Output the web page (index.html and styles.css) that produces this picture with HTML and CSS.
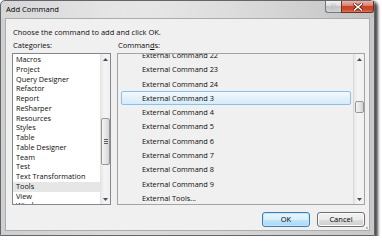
FILE: index.html
```html
<!DOCTYPE html>
<html>
<head>
<meta charset="utf-8">
<link rel="stylesheet" href="styles.css">
</head>
<body>
<div class="window">
  <div class="titlebar">
    <span class="title">Add Command</span>
    <div class="caption">
      <div class="cbtn help">?</div>
      <div class="cbtn close">
        <svg width="10" height="8" viewBox="0 0 10 8"><path d="M1.5 1 L8.5 7 M8.5 1 L1.5 7" stroke="#5a1a10" stroke-width="3" stroke-linecap="square"/><path d="M1.5 1 L8.5 7 M8.5 1 L1.5 7" stroke="#fff" stroke-width="1.6" stroke-linecap="square"/></svg>
      </div>
    </div>
  </div>
  <div class="client">
    <div class="prompt">Choose the command to add and click OK.</div>
    <div class="columns">
      <div class="col">
        <div class="label">Categories:</div>
        <div class="listbox cats">
          <div class="items">
            <div class="item">Macros</div>
            <div class="item">Project</div>
            <div class="item">Query Designer</div>
            <div class="item">Refactor</div>
            <div class="item">Report</div>
            <div class="item">ReSharper</div>
            <div class="item">Resources</div>
            <div class="item">Styles</div>
            <div class="item">Table</div>
            <div class="item">Table Designer</div>
            <div class="item">Team</div>
            <div class="item">Test</div>
            <div class="item">Text Transformation</div>
            <div class="item hl">Tools</div>
            <div class="item">View</div>
            <div class="item">Window</div>
          </div>
          <div class="sbar">
            <div class="arrow"><svg width="5" height="3" viewBox="0 0 5 3"><path d="M0 3 L2.5 0 L5 3Z" fill="#4d4d4d"/></svg></div>
            <div class="track">
              <div class="thumb big"><span class="grip"></span></div>
            </div>
            <div class="arrow"><svg width="5" height="3" viewBox="0 0 5 3"><path d="M0 0 L2.5 3 L5 0Z" fill="#4d4d4d"/></svg></div>
          </div>
        </div>
      </div>
      <div class="col">
        <div class="label">Comman<span class="ak">d</span>s:</div>
        <div class="listbox cmds">
          <div class="items">
            <div class="rows">
              <div class="row">External Command 22</div>
              <div class="row">External Command 23</div>
              <div class="row">External Command 24</div>
              <div class="row sel">External Command 3</div>
              <div class="row">External Command 4</div>
              <div class="row">External Command 5</div>
              <div class="row">External Command 6</div>
              <div class="row">External Command 7</div>
              <div class="row">External Command 8</div>
              <div class="row">External Command 9</div>
              <div class="row">External Tools...</div>
            </div>
          </div>
          <div class="sbar wide">
            <div class="arrow"><svg width="5" height="3" viewBox="0 0 5 3"><path d="M0 3 L2.5 0 L5 3Z" fill="#4d4d4d"/></svg></div>
            <div class="track">
              <div class="thumb small"></div>
            </div>
            <div class="arrow"><svg width="5" height="3" viewBox="0 0 5 3"><path d="M0 0 L2.5 3 L5 0Z" fill="#4d4d4d"/></svg></div>
          </div>
        </div>
      </div>
    </div>
    <div class="buttons">
      <div class="btn ok">OK</div>
      <div class="btn">Cancel</div>
    </div>
  </div>
</div>
</body>
</html>
```
FILE: styles.css
```css
html, body {
  margin: 0;
  background: #ffffff;
}
body {
  font-family: "Open Sans", "Noto Sans", sans-serif;
  font-size: 7.5px;
  color: #0c0c0c;
}
.window {
  width: 375px;
  height: 236px;
  box-sizing: border-box;
  border: 1px solid #5f666d;
  border-radius: 5px 5px 0 0;
  background: linear-gradient(to right, #cfcfcf, #dadada 30%, #d6d6d6 60%, #c8c8c8);
  box-shadow: 2px 2px 3px 1px rgba(0, 0, 0, 0.7);
  display: flex;
  flex-direction: column;
}
.titlebar {
  height: 17px;
  display: flex;
  align-items: flex-start;
  background: linear-gradient(to right, rgba(255,255,255,0.15), rgba(255,255,255,0.35) 40%, rgba(0,0,0,0.03));
  border-radius: 4px 4px 0 0;
}
.title {
  padding-left: 5px;
  line-height: 16px;
  font-size: 7.6px;
  color: #000;
}
.caption {
  margin-left: auto;
  display: flex;
}
.cbtn {
  height: 12px;
  box-sizing: border-box;
  display: flex;
  align-items: center;
  justify-content: center;
}
.help {
  width: 16px;
  border: 1px solid #717a83;
  border-top: none;
  border-right: none;
  border-radius: 0 0 0 3px;
  background: linear-gradient(#f2f2f2, #dcdcdc 45%, #c4c4c4 50%, #d2d2d2);
  color: #eeeeee;
  font-size: 8px;
  font-weight: bold;
  text-shadow: 0 0 1px #555;
  line-height: 10px;
}
.close {
  width: 33px;
  border: 1px solid #6b3128;
  border-top: none;
  border-radius: 0 0 3px 0;
  background: linear-gradient(#eab3a7, #dc8572 40%, #c94326 50%, #cf4a2b 80%, #e07a5c);
}
.client {
  flex: 1;
  margin: 0 4px 4px 4px;
  border: 1px solid #a9adb1;
  background-color: #f0f0f0;
  background-image: radial-gradient(circle, #9a9a9a 0.6px, transparent 0.9px);
  background-size: 2px 2px;
  background-position: right 1px bottom 1px;
  background-repeat: no-repeat;
  padding: 7px 4px 3px 6px;
  display: flex;
  flex-direction: column;
}
.prompt {
  line-height: 12px;
  margin-bottom: 2px;
  padding-left: 1px;
}
.label {
  line-height: 11px;
  margin-bottom: 2px;
  padding-left: 1px;
}
.ak {
  text-decoration: underline;
}
.columns {
  display: grid;
  grid-template-columns: 99px 248px;
  column-gap: 6px;
}
.col {
  display: flex;
  flex-direction: column;
}
.listbox {
  height: 152px;
  box-sizing: border-box;
  display: flex;
  overflow: hidden;
}
.cats {
  border: 1px solid #828790;
  background: #ffffff;
}
.cmds {
  border: 1px solid #a3a3a3;
  background: #f0f0f0;
}
.items {
  flex: 1;
  overflow: hidden;
}
.cats .items {
  padding-top: 1px;
}
.item {
  height: 9.75px;
  line-height: 9.75px;
  padding-left: 3px;
  white-space: nowrap;
  font-size: 7.3px;
}
.item.hl {
  background: #e6e6e6;
}
.rows {
  margin-top: -6px;
}
.row {
  height: 14.3px;
  box-sizing: border-box;
  line-height: 12.3px;
  margin: 0 2px 0 3px;
  padding-left: 20px;
  border: 1px solid transparent;
  white-space: nowrap;
  font-size: 7.35px;
}
.row.sel {
  border-color: #86bff0;
  border-radius: 2px;
  background: linear-gradient(#f3f9fd, #e4f1fa 50%, #d6ebf7);
}
.sbar {
  width: 10px;
  display: flex;
  flex-direction: column;
  background: linear-gradient(to right, #e8e8e8, #f4f4f4 40%, #f0f0f0);
  border-left: 1px solid #e2e2e2;
  box-sizing: border-box;
}
.sbar.wide {
  width: 11px;
  border-left: 1px solid #d9d9d9;
}
.arrow {
  height: 10px;
  display: flex;
  align-items: center;
  justify-content: center;
}
.track {
  flex: 1;
  display: flex;
  flex-direction: column;
  align-items: center;
}
.thumb {
  box-sizing: border-box;
  border: 1px solid #979797;
  border-radius: 2px;
  background: linear-gradient(to right, #f4f4f4, #e6e6e6 50%, #d4d4d4);
  display: flex;
  align-items: center;
  justify-content: center;
}
.thumb.big {
  width: 9px;
  height: 47px;
  margin-top: 64px;
}
.cats .track {
  margin-top: -10px;
}
.thumb.small {
  width: 9px;
  height: 12px;
  margin-top: 37px;
}
.grip {
  width: 4px;
  height: 5px;
  background: repeating-linear-gradient(#5e5e5e 0 1px, transparent 1px 2px);
}
.buttons {
  margin-top: 7px;
  display: flex;
  justify-content: flex-end;
  gap: 7px;
}
.btn {
  width: 48px;
  height: 15px;
  box-sizing: border-box;
  border: 1px solid #707070;
  border-radius: 3px;
  background: linear-gradient(#f2f2f2, #ebebeb 50%, #dddddd 50%, #cfcfcf);
  box-shadow: inset 0 0 0 1px #fbfbfb;
  text-align: center;
  line-height: 13px;
  color: #000;
}
.btn.ok {
  border-color: #3c7fb1;
  box-shadow: inset 0 0 0 1px #c4e5f6;
  background: linear-gradient(#eaf6fd, #d9f0fc 50%, #bee6fd 50%, #a7d9f5);
}
```
